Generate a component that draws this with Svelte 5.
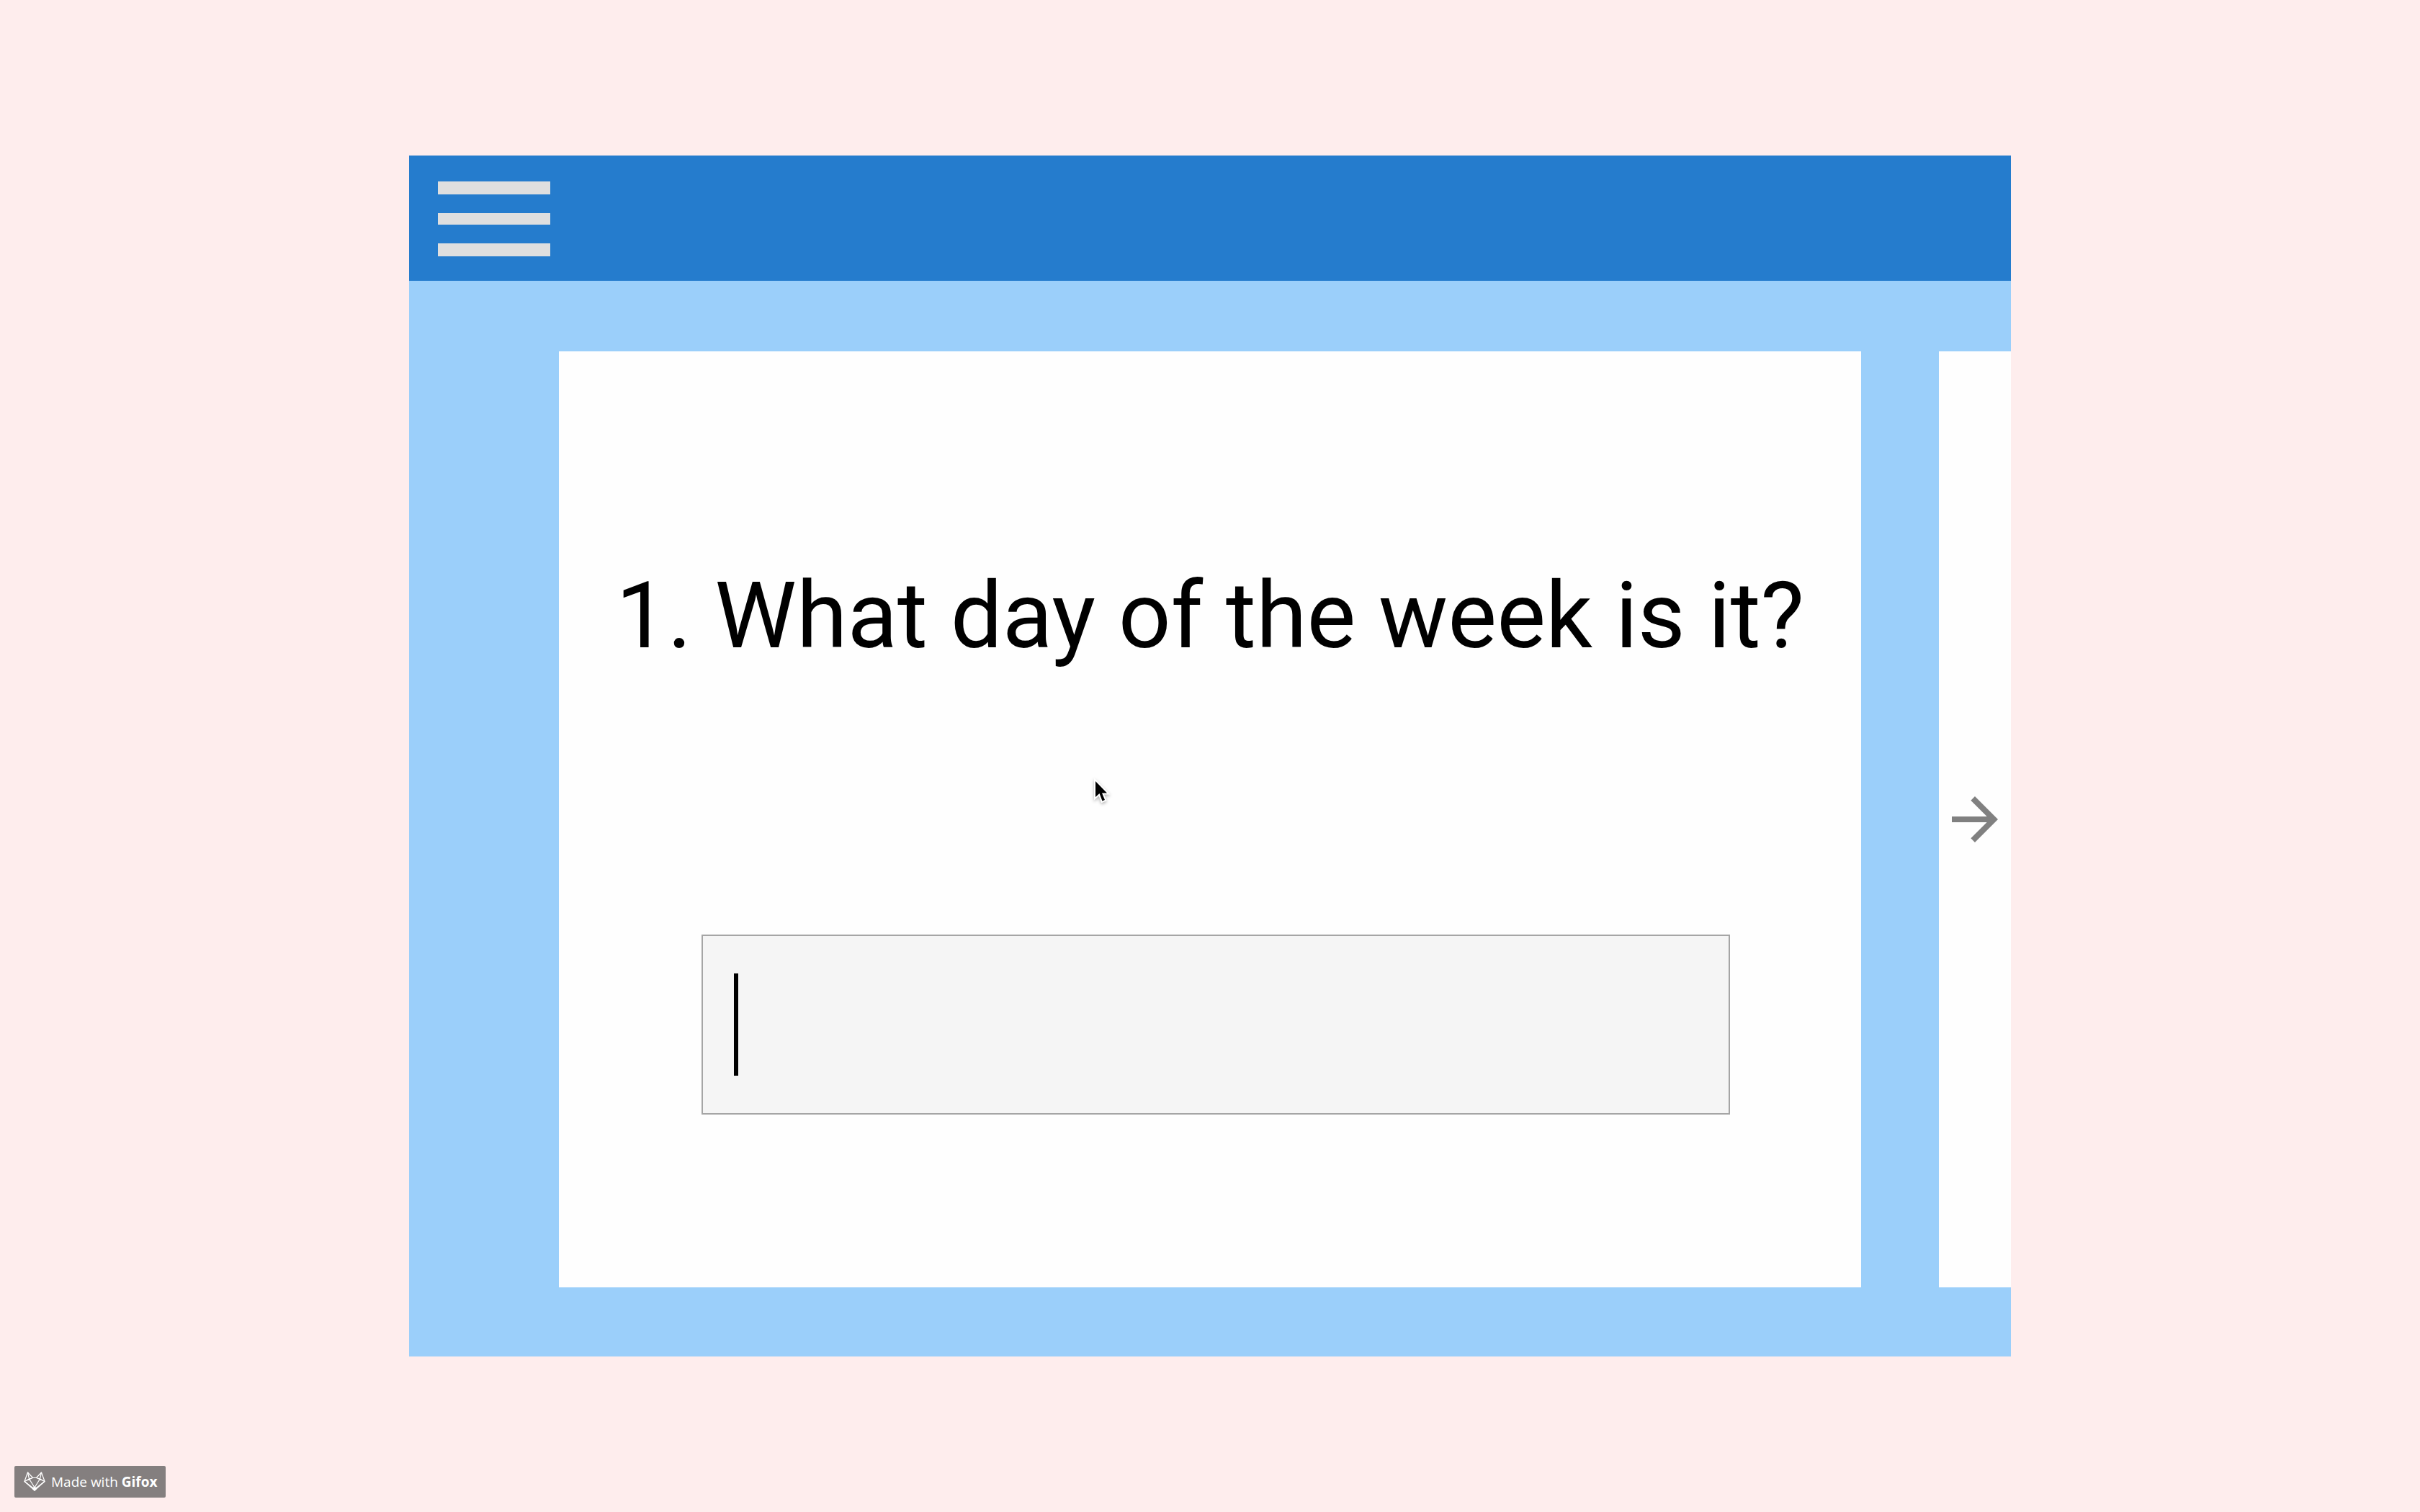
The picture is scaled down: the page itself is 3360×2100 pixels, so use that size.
<script>
  let answer = $state('');
</script>

<main class="page">
  <section class="window">
    <header class="bar">
      <button class="menu" type="button" aria-label="Open menu">
        <svg viewBox="0 0 156 104" aria-hidden="true">
          <path d="M0 0H156V18H0zM0 44H156V60H0zM0 86H156V104H0z" fill="#dfdfdf" />
        </svg>
      </button>
    </header>

    <div class="slides">
      <form class="card">
        <h1><label for="answer">1. What day of the week is it?</label></h1>
        <div class="field">
          <span class="caret"></span>
          <input id="answer" type="text" autocomplete="off" bind:value={answer} />
        </div>
      </form>
      <button class="next" type="button" aria-label="Next question">
        <svg viewBox="0 0 24 24" aria-hidden="true">
          <path d="M12 4l-1.41 1.41L16.17 11H4v2h12.17l-5.58 5.59L12 20l8-8z" fill="#808080" />
        </svg>
      </button>
    </div>

    <svg class="pointer" viewBox="0 0 28 40" aria-hidden="true">
      <path d="M5 5V27L10.500 22L14.500 32.500L18 31L14 21.500H21z" fill="#000" stroke="#fff" stroke-width="4" paint-order="stroke" />
    </svg>
  </section>

  <footer class="badge">
    <svg viewBox="0 0 30 28" aria-hidden="true">
      <g fill="none" stroke="#fff" stroke-width="1.200" stroke-linejoin="round">
        <path d="M5.500 1L1 13.500L15 26L29 13.500L24.500 1L17.500 8.500H12.500z" />
        <path d="M5.500 1L7.500 10L1 13.500L12.500 8.500M24.500 1L22.500 10L29 13.500L17.500 8.500M7.500 10L15 22L22.500 10M7.500 10L12.500 8.500M22.500 10L17.500 8.500M1 13.500L12 22M29 13.500L18 22" />
      </g>
      <path d="M12 21.500H18L18 24L15 27L12 24z" fill="#fff" />
    </svg>
    <span>Made with <b>Gifox</b></span>
  </footer>
</main>

<style>
  :global(body) {
    margin: 0;
    background: #feeded;
  }

  .page {
    box-sizing: border-box;
    min-height: 100vh;
    padding: 100px 20px;
    display: flex;
    align-items: center;
    justify-content: center;
    position: relative;
    font-family: Roboto, 'Liberation Sans', sans-serif;
  }

  .window {
    position: relative;
    width: 100%;
    max-width: 2224px;
    overflow: hidden;
    background: #9bcffa;
  }

  .bar {
    display: flex;
    padding: 36px 40px 34px;
    background: #257ccd;
  }

  button {
    padding: 0;
    border: 0;
    background: none;
    cursor: pointer;
  }

  .menu svg {
    display: block;
    width: 156px;
  }

  .slides {
    display: flex;
    gap: 108px;
    padding: 98px 0 96px 208px;
  }

  .card {
    flex: 1;
    min-width: 0;
    padding: 292px 0 240px;
    background: #fefefe;
  }

  h1 {
    margin: 0 0 368px;
    font-size: 128px;
    line-height: 150px;
    font-weight: 400;
    text-align: center;
    color: #000;
  }

  .field {
    display: flex;
    align-items: center;
    margin: 0 182px 0 198px;
    padding: 52px 43px;
    border: 2px solid #a5a5a5;
    background: #f5f5f5;
  }

  .caret {
    width: 6px;
    height: 142px;
    background: #000;
  }

  input {
    flex: 1;
    min-width: 0;
    height: 142px;
    padding: 0;
    border: 0;
    outline: 0;
    background: none;
    caret-color: transparent;
    font: inherit;
    font-size: 128px;
  }

  .next {
    flex: 0 0 100px;
    display: flex;
    align-items: center;
    justify-content: center;
    background: #fefefe;
  }

  .next svg {
    width: 96px;
  }

  .pointer {
    position: absolute;
    left: 948px;
    top: 864px;
    width: 28px;
    filter: drop-shadow(0 2px 2px rgba(0, 0, 0, 0.3));
  }

  .badge {
    position: absolute;
    left: 20px;
    bottom: 20px;
    display: flex;
    align-items: center;
    gap: 8px;
    padding: 0 12px 0 13px;
    border-radius: 2px;
    background: #847f7f;
    color: #fff;
    font-family: 'Open Sans', sans-serif;
    font-size: 19px;
    line-height: 44px;
    white-space: nowrap;
  }

  .badge svg {
    width: 30px;
  }
</style>
